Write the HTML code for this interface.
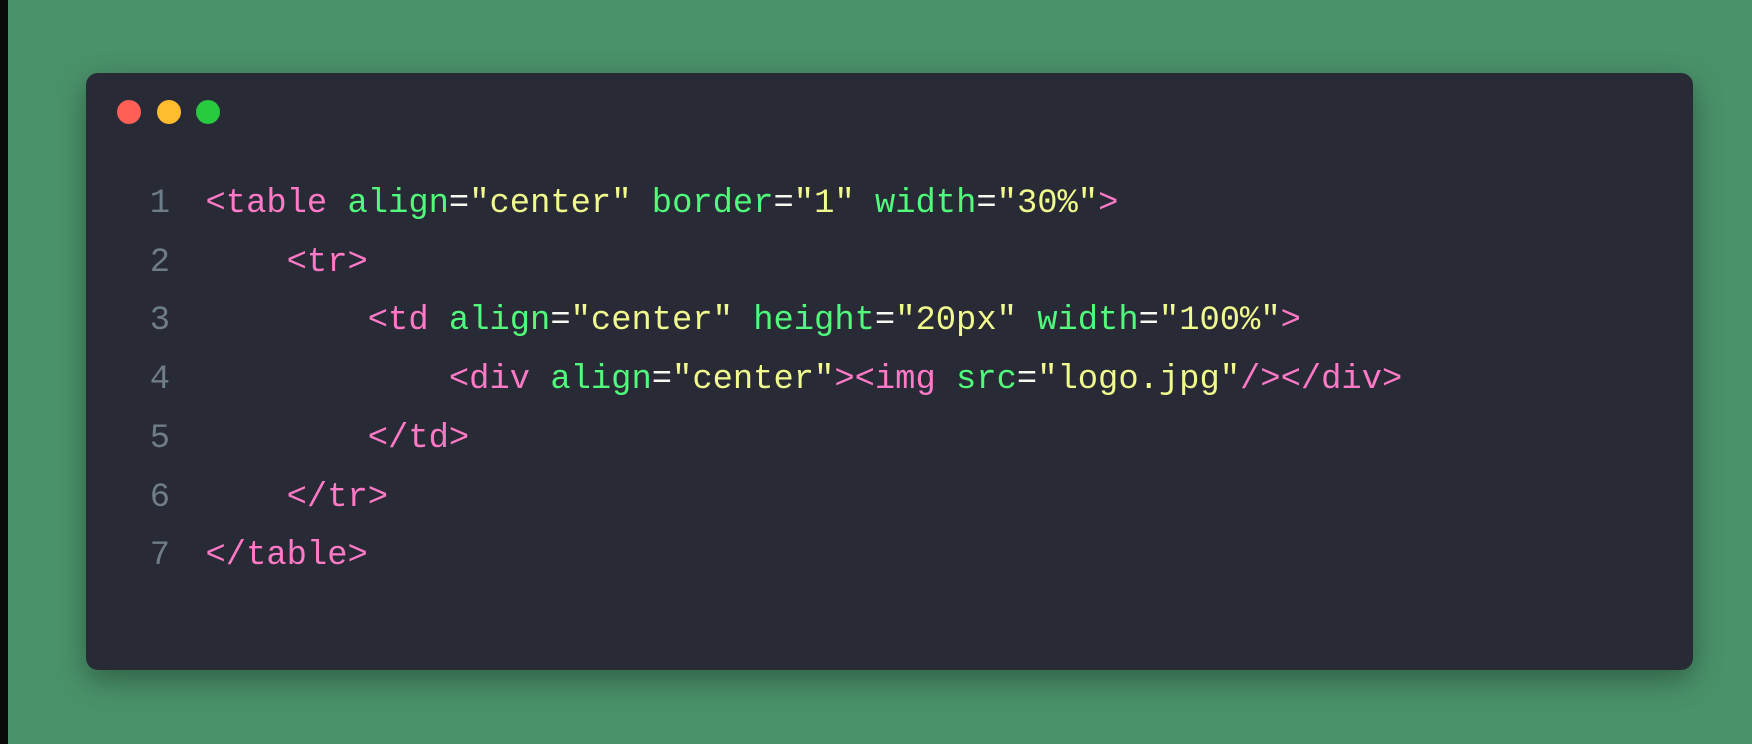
<!DOCTYPE html>
<html><head><meta charset="utf-8"><style>
html,body{margin:0;padding:0}
body{width:1752px;height:744px;background:#4a926a;position:relative;overflow:hidden;font-family:"Liberation Mono",monospace}
.strip{position:absolute;left:0;top:0;width:8px;height:744px;background:#0a0a0a}
.card{position:absolute;left:86px;top:73px;width:1607px;height:597px;background:#282a36;border-radius:12px;box-shadow:0 10px 30px rgba(0,0,0,.35)}
.dot{position:absolute;top:27px;width:24px;height:24px;border-radius:50%}
.code{position:absolute;left:0;top:102px;font-size:33.8px;line-height:58.7px;white-space:pre;color:#f8f8f2}
.n{display:inline-block;width:84px;margin-right:35.5px;text-align:right;color:#6f7d88}
.t{color:#ff79c6}.a{color:#50fa7b}.s{color:#f1fa8c}
</style></head><body>
<div class="strip"></div>
<div class="card">
<div class="dot" style="left:31px;background:#ff5f56"></div>
<div class="dot" style="left:71px;background:#ffbd2e"></div>
<div class="dot" style="left:110px;background:#27c93f"></div>
<div class="code"><span class="n">1</span><span class="t">&lt;table</span> <span class="a">align</span>=<span class="s">"center"</span> <span class="a">border</span>=<span class="s">"1"</span> <span class="a">width</span>=<span class="s">"30%"</span><span class="t">&gt;</span>
<span class="n">2</span>    <span class="t">&lt;tr&gt;</span>
<span class="n">3</span>        <span class="t">&lt;td</span> <span class="a">align</span>=<span class="s">"center"</span> <span class="a">height</span>=<span class="s">"20px"</span> <span class="a">width</span>=<span class="s">"100%"</span><span class="t">&gt;</span>
<span class="n">4</span>            <span class="t">&lt;div</span> <span class="a">align</span>=<span class="s">"center"</span><span class="t">&gt;&lt;img</span> <span class="a">src</span>=<span class="s">"logo.jpg"</span><span class="t">/&gt;&lt;/div&gt;</span>
<span class="n">5</span>        <span class="t">&lt;/td&gt;</span>
<span class="n">6</span>    <span class="t">&lt;/tr&gt;</span>
<span class="n">7</span><span class="t">&lt;/table&gt;</span></div>
</div>
</body></html>
